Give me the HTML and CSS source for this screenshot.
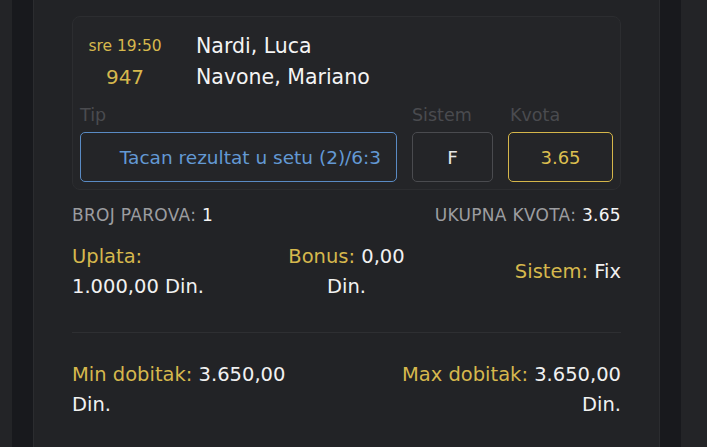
FILE: index.html
```html
<!DOCTYPE html>
<html>
<head>
<meta charset="utf-8">
<link rel="stylesheet" href="styles.css">
</head>
<body>
<div class="frame">
  <div class="panel">
    <div class="card">
      <div class="event">
        <div class="time">
          <div class="day">sre 19:50</div>
          <div class="code">947</div>
        </div>
        <div class="teams">
          <div>Nardi, Luca</div>
          <div>Navone, Mariano</div>
        </div>
      </div>
      <div class="picks">
        <div class="label">Tip</div>
        <div class="label">Sistem</div>
        <div class="label label-kvota">Kvota</div>
        <div class="box box-tip">Tacan rezultat u setu (2)/6:3</div>
        <div class="box box-sys">F</div>
        <div class="box box-odd">3.65</div>
      </div>
    </div>

    <div class="summary">
      <div>BROJ PAROVA: <span class="val">1</span></div>
      <div>UKUPNA KVOTA: <span class="val">3.65</span></div>
    </div>

    <div class="stakes">
      <div class="stake stake-left"><span class="gold">Uplata:</span><br>1.000,00 Din.</div>
      <div class="stake stake-mid"><span class="gold">Bonus:</span> 0,00<br>Din.</div>
      <div class="stake stake-right"><span class="gold">Sistem:</span> Fix</div>
    </div>

    <div class="divider"></div>

    <div class="wins">
      <div class="win"><span class="gold">Min dobitak:</span> 3.650,00<br>Din.</div>
      <div class="win win-right"><span class="gold">Max dobitak:</span> 3.650,00<br>Din.</div>
    </div>
  </div>
</div>
</body>
</html>
```

FILE: styles.css
```css
* { box-sizing: border-box; }
html, body {
  margin: 0;
  padding: 0;
  height: 447px;
  overflow: hidden;
}
body {
  background: #232427;
  font-family: "DejaVu Sans", "Noto Sans", sans-serif;
  color: #f1f1f1;
}
.frame {
  margin-left: 12px;
  width: 669px;
  height: 447px;
  background: #18191d;
  padding: 0 21px;
}
.panel {
  height: 447px;
  background: #222326;
  border-left: 1px solid #2b2c2f;
  border-right: 1px solid #2b2c2f;
  padding: 16px 38px 0 38px;
}
.card {
  border: 1px solid #2c2d30;
  border-radius: 8px;
  background: #242528;
  padding: 14px 7px 7px 7px;
}
.event {
  display: flex;
  align-items: center;
}
.time {
  width: 90px;
  text-align: center;
  color: #d6b84d;
}
.day {
  font-size: 15.5px;
  line-height: 31px;
  height: 31px;
}
.code {
  font-size: 20px;
  line-height: 31px;
  height: 31px;
}
.teams {
  margin-left: 26px;
  font-size: 20.5px;
  line-height: 31px;
  color: #f4f4f4;
}
.picks {
  margin-top: 12px;
  display: grid;
  grid-template-columns: 317px 81px 105px;
  column-gap: 15px;
  row-gap: 7px;
}
.label {
  font-size: 17.5px;
  line-height: 20px;
  color: #4a4b4f;
}
.label-kvota { padding-left: 2px; }
.box {
  height: 50px;
  border: 1px solid #4a4b4f;
  border-radius: 5px;
  display: flex;
  align-items: center;
  justify-content: center;
  font-size: 18.5px;
}
.box-tip {
  border-color: #5a8bc4;
  color: #6399d4;
  padding-left: 24px;
}
.box-sys {
  color: #e6e6e6;
}
.box-odd {
  border-color: #d5b64a;
  color: #dcbf4f;
  font-size: 18px;
}
.summary {
  margin-top: 15px;
  display: flex;
  justify-content: space-between;
  font-size: 17px;
  letter-spacing: 0.3px;
  line-height: 20px;
  color: #9c9da0;
}
.summary .val { color: #f4f4f4; }
.stakes {
  margin-top: 17px;
  display: flex;
  justify-content: space-between;
  align-items: center;
  font-size: 19.5px;
  line-height: 30px;
}
.stake { flex: 1; }
.stake-mid { text-align: center; }
.stake-right { text-align: right; }
.gold { color: #d6b84d; }
.divider {
  margin-top: 30px;
  height: 1px;
  background: #2e2f32;
}
.wins {
  margin-top: 27px;
  display: flex;
  justify-content: space-between;
  font-size: 19.5px;
  line-height: 30px;
}
.win-right { text-align: right; }
```
